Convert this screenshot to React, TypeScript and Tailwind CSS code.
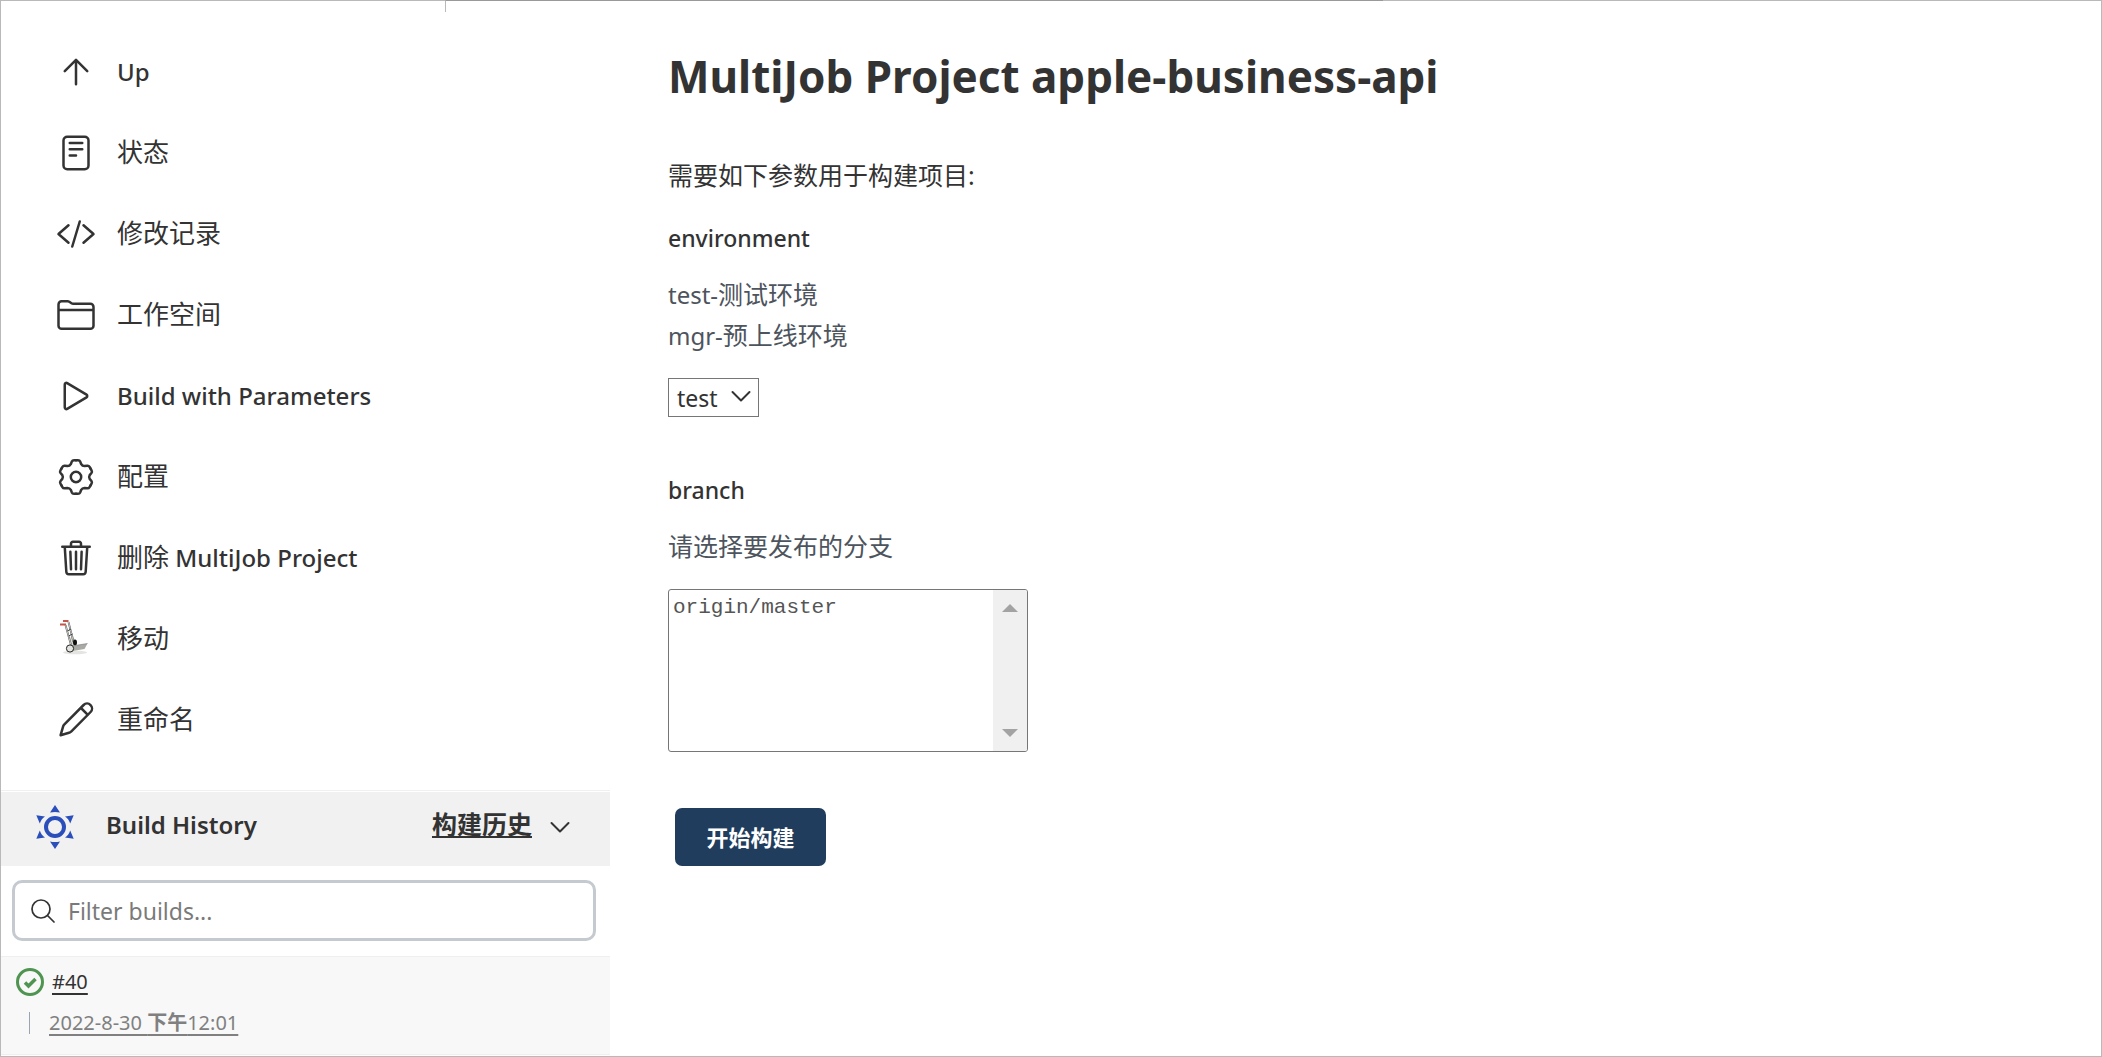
import React from 'react';
import { clsx } from 'clsx';

interface IconProps {
  children: React.ReactNode;
  viewBox?: string;
  strokeWidth?: number;
}

const Icon: React.FC<IconProps> = ({ children, viewBox = '0 0 512 512', strokeWidth = 32 }) => (
  <svg
    className="w-10 h-10 shrink-0"
    viewBox={viewBox}
    fill="none"
    stroke="currentColor"
    strokeWidth={strokeWidth}
    strokeLinecap="round"
    strokeLinejoin="round"
    aria-hidden="true"
  >
    {children}
  </svg>
);

const UpIcon = () => (
  <Icon>
    <path d="M112 244l144-144 144 144M256 120v292" />
  </Icon>
);

const StatusIcon = () => (
  <Icon>
    <rect x="96" y="48" width="320" height="416" rx="48" />
    <path d="M176 128h160M176 208h160M176 288h80" />
  </Icon>
);

const ChangesIcon = () => (
  <Icon>
    <path d="M160 368L32 256l128-112M352 368l128-112-128-112M304 96l-96 320" />
  </Icon>
);

const FolderIcon = () => (
  <Icon>
    <path d="M440 432H72a40 40 0 01-40-40V120a40 40 0 0140-40h75.89a40 40 0 0122.19 6.72l27.84 18.56a40 40 0 0022.19 6.72H440a40 40 0 0140 40v240a40 40 0 01-40 40zM32 192h448" />
  </Icon>
);

const PlayIcon = () => (
  <Icon>
    <path d="M112 111v290c0 17.44 17 28.52 31 20.16l247.9-148.37c12.12-7.25 12.12-26.33 0-33.58L143 90.84c-14-8.36-31 2.72-31 20.16z" />
  </Icon>
);

const GearIcon = () => (
  <Icon viewBox="-20 -20 40 40" strokeWidth={2.5}>
    <circle r="5.2" />
    {[0, 60, 120, 180, 240, 300].map((deg) => (
      <path
        key={deg}
        transform={`rotate(${deg})`}
        d="M0-16.8H2Q3.6-16.8 4.2-15.4L5.2-12.8Q6.3-10.9 8.48-10.9L11.24-11.34Q12.8-11.5 13.6-10.1L14.55-8.4"
      />
    ))}
  </Icon>
);

const TrashIcon = () => (
  <Icon>
    <path d="M112 112l20 320c.95 18.49 14.4 32 32 32h184c17.67 0 30.87-13.51 32-32l20-320M80 112h352" />
    <path d="M192 112V72h0a23.93 23.93 0 0124-24h80a23.93 23.93 0 0124 24h0v40M256 176v224M184 176l8 224M328 176l-8 224" />
  </Icon>
);

const PencilIcon = () => (
  <Icon viewBox="0 0 40 40" strokeWidth={2.5}>
    <path d="M4.6 35.2L7 26.8Q7.4 25.4 8.4 24.4L27.6 5a4.95 4.95 0 0 1 7 7L15.4 31.4Q14.4 32.4 13 32.8ZM25 8l6.8 6.8" />
  </Icon>
);

const TruckIcon = () => (
  <svg className="w-10 h-10 shrink-0" viewBox="0 0 40 40" fill="none" aria-hidden="true">
    <ellipse cx="19" cy="33.4" rx="12" ry="1.8" fill="#e4e4e2" />
    <path d="M13.5 19l4-2 3 11-5 1z" fill="#d7d8d2" />
    <path d="M9.5 6l5.500 20M12.500 3l5 20" stroke="#555" strokeWidth="1.8" />
    <path d="M9.5 6l5.500 20M12.500 3l5 20" stroke="#e4e4e0" strokeWidth="0.8" />
    <path d="M11.5 12l3.500-2M12.500 17l4-2" stroke="#444" strokeWidth="1" />
    <ellipse cx="19" cy="23.5" rx="2" ry="3" fill="#111" />
    <path d="M16 27l15.5-2.500-3 5.500-12 2z" fill="#a9aaa5" />
    <path d="M16 27l15.5-2.500" stroke="#777" strokeWidth="0.6" />
    <path d="M4 5.500h6M7 2h5.500" stroke="#c4564a" strokeWidth="1.8" />
    <circle cx="14" cy="29.5" r="3.6" fill="#e2e4e0" stroke="#222" strokeWidth="1" />
  </svg>
);

const ChevronDown: React.FC<{ className?: string }> = ({ className }) => (
  <svg
    className={clsx('w-5 h-5', className)}
    viewBox="0 0 20 20"
    fill="none"
    stroke="currentColor"
    strokeWidth="2"
    strokeLinecap="round"
    strokeLinejoin="round"
    aria-hidden="true"
  >
    <path d="M1.5 6L10 14.5 18.5 6" />
  </svg>
);

const tasks = [
  { icon: UpIcon, label: 'Up' },
  { icon: StatusIcon, label: '状态' },
  { icon: ChangesIcon, label: '修改记录' },
  { icon: FolderIcon, label: '工作空间' },
  { icon: PlayIcon, label: 'Build with Parameters' },
  { icon: GearIcon, label: '配置' },
  { icon: TrashIcon, label: '删除', suffix: 'MultiJob Project' },
  { icon: TruckIcon, label: '移动' },
  { icon: PencilIcon, label: '重命名' },
];

const isLatin = (s: string) => /^[\x20-\x7e]+$/.test(s);

const BuildHistory = () => (
  <section className="border-t border-[#f0f0f0] mt-[30px]">
    <header className="mt-px h-[74px] pb-1 bg-[#f1f1f1] flex items-center pl-[34px] pr-10">
      <svg className="w-10 h-11 shrink-0" viewBox="-20 -22 40 44" fill="#2a4fbb" aria-hidden="true">
        <circle r="9" fill="none" stroke="#2a4fbb" strokeWidth="4" />
        <path d="M0-22L5-14.5Q0-15.5-5-14.5ZM0 22L5 14.5Q0 15.5-5 14.5Z" />
        <path d="M18.7-11.8L15.2-3.5Q13.5-8.5 10-10.5ZM-18.7-11.8L-15.2-3.5Q-13.5-8.5-10-10.5Z" />
        <path d="M18.7 11.8L15.2 3.5Q13.5 8.5 10 10.5ZM-18.7 11.8L-15.2 3.5Q-13.5 8.5-10 10.5Z" />
      </svg>
      <h2 className="ml-[31px] pb-1 text-[24px] font-semibold">Build History</h2>
      <a href="#trend" className="ml-auto pb-1 text-[25px] font-bold underline decoration-2 underline-offset-2">
        构建历史
      </a>
      <button type="button" aria-label="Collapse" className="ml-[18px]">
        <ChevronDown />
      </button>
    </header>

    <div className="pl-[11px] pr-[14px] pt-[14px] pb-[15px]">
      <label className="h-[61px] flex items-center gap-[13px] px-4 border-[3px] border-[#c5cad1] rounded-[10px]">
        <svg className="w-6 h-6 shrink-0" viewBox="0 0 24 24" fill="none" stroke="currentColor" strokeWidth="1.7" strokeLinecap="round" aria-hidden="true">
          <circle cx="10" cy="10" r="9" />
          <path d="M16.5 16.5L23 23" />
        </svg>
        <input
          type="text"
          aria-label="Filter builds"
          placeholder="Filter builds..."
          className="flex-1 min-w-0 h-10 text-[23px] outline-none placeholder:text-[#7a7a7a]"
        />
      </label>
    </div>

    <div className="h-[99px] bg-[#f8f8f8] border-y border-[#efefef] pl-[15px] pt-[7px]">
      <div className="flex items-center gap-2 h-9">
        <svg className="w-7 h-7 shrink-0" viewBox="0 0 28 28" fill="none" stroke="#4f9450" role="img" aria-label="Success">
          <circle cx="14" cy="14" r="12.5" strokeWidth="3" />
          <path d="M9 14.5l3.5 3.5 7-7" strokeWidth="3.5" />
        </svg>
        <a href="#40" className="text-[20px] underline decoration-2 underline-offset-4">#40</a>
      </div>
      <div className="flex items-center h-[46px] pl-[13px]">
        <span className="w-px h-[22px] bg-[#9aa5b1]" />
        <a href="#40" className="ml-[19px] text-[20px] text-[#808080] underline decoration-2 underline-offset-4">
          2022-8-30 <span className="font-bold">下午</span>12:01
        </a>
      </div>
    </div>
  </section>
);

const Sidebar = () => (
  <aside className="w-[609px] shrink-0 pt-[30px]">
    <nav>
      {tasks.map(({ icon: TaskIcon, label, suffix }) => (
        <a key={label} href="#task" className="h-[81px] flex items-center gap-[21px] pl-[55px]">
          <TaskIcon />
          <span className={isLatin(label) ? 'text-[24px] font-medium' : 'text-[26px]'}>
            {label}
            {suffix && <span className="text-[24px] font-medium"> {suffix}</span>}
          </span>
        </a>
      ))}
    </nav>
    <BuildHistory />
  </aside>
);

const BuildForm = () => (
  <main className="flex-1 pl-[58px] pt-[43px]">
    <h1 className="text-[44px] leading-[64px] font-bold">MultiJob Project apple-business-api</h1>
    <form className="text-[25px] leading-[41px]" onSubmit={(e) => e.preventDefault()}>
      <p className="mt-[47px]">需要如下参数用于构建项目:</p>

      <label htmlFor="environment" className="block w-fit mt-[22px] text-[23px] font-medium">environment</label>
      <p className="mt-[15px] text-[#4d545d]">
        <span className="text-[24px]">test-</span>测试环境
        <br />
        <span className="text-[24px]">mgr-</span>预上线环境
      </p>
      <div className="relative w-fit mt-[22px]">
        <select id="environment" className="block w-[91px] h-[39px] pl-2 pt-0.5 appearance-none border border-[#767676] text-[23px] leading-[35px]">
          <option>test</option>
          <option>mgr</option>
        </select>
        <ChevronDown className="absolute right-2 top-2 pointer-events-none" />
      </div>

      <label htmlFor="branch" className="block w-fit mt-[53px] text-[23px] font-medium">branch</label>
      <p className="mt-[15px] text-[#4d545d]">请选择要发布的分支</p>
      <div className="mt-[22px] w-[360px] h-[163px] flex border border-[#767676] rounded-[3px] overflow-hidden">
        <select
          id="branch"
          multiple
          className="flex-1 min-w-0 h-full pt-1.5 overflow-hidden appearance-none font-['Liberation_Mono',monospace] text-[21px] text-[#555]"
        >
          <option className="pl-1 pr-0 py-0">origin/master</option>
        </select>
        <div className="w-[34px] bg-[#f0f0f0] flex flex-col justify-between items-center py-[14px]">
          <svg className="w-4 h-2" viewBox="0 0 16 8" fill="#a3a3a3" aria-hidden="true"><path d="M8 0l8 8H0z" /></svg>
          <svg className="w-4 h-2" viewBox="0 0 16 8" fill="#a3a3a3" aria-hidden="true"><path d="M8 8l8-8H0z" /></svg>
        </div>
      </div>

      <button type="submit" className="mt-14 ml-[7px] w-[151px] h-[58px] rounded-[7px] bg-[#203d5d] text-white text-[22px] font-bold">
        开始构建
      </button>
    </form>
  </main>
);

export default function App() {
  return (
    <div className="relative min-h-screen flex border border-[#b9b9b9] bg-white text-[#333] font-['Noto_Sans','Noto_Sans_CJK_SC',sans-serif]">
      {/* Tab edge along the top of the page */}
      <div className="absolute -top-px left-[444px] w-[938px] h-3 border-t border-l border-t-[#999] border-l-[#b9b9b9] pointer-events-none" />
      <Sidebar />
      <BuildForm />
    </div>
  );
}
